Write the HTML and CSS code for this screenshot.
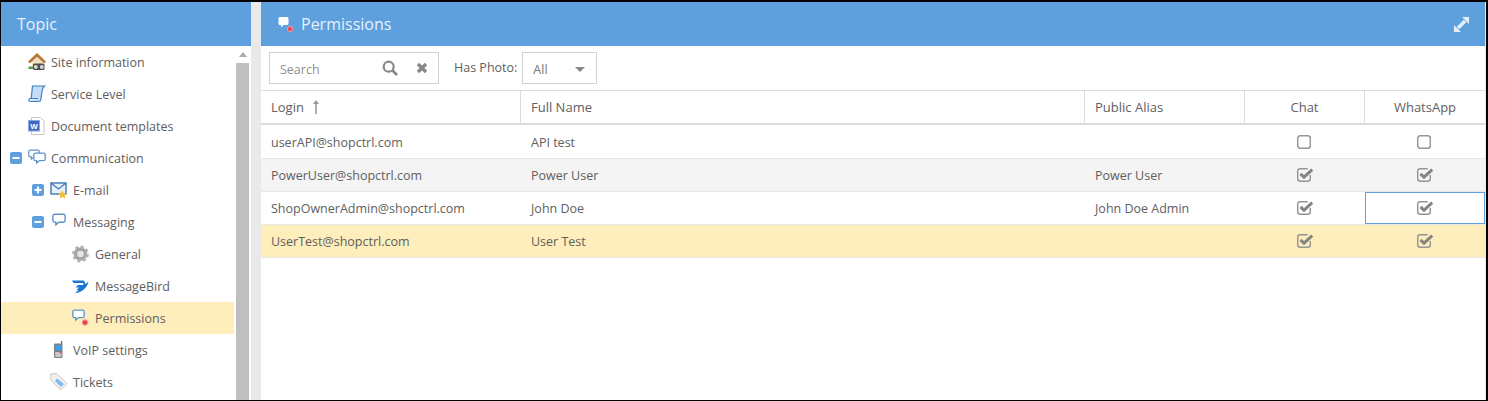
FILE: index.html
```html
<!DOCTYPE html>
<html lang="en">
<head>
<meta charset="utf-8">
<title>Permissions</title>
<link rel="stylesheet" href="styles.css">
</head>
<body>
<svg class="defs" width="0" height="0" aria-hidden="true">
  <defs>
    <symbol id="bubble" viewBox="0 0 16 16">
      <path d="M3 1.500h10a2 2 0 0 1 2 2v5a2 2 0 0 1-2 2H8l-3.500 3v-3H3a2 2 0 0 1-2-2v-5a2 2 0 0 1 2-2z" fill="#fff" stroke="#5f93cc" stroke-width="1.600"/>
    </symbol>
    <symbol id="box" viewBox="0 0 14 14" overflow="visible">
      <rect x="0.700" y="0.700" width="12.600" height="12.600" rx="2.500" fill="none" stroke="#949494" stroke-width="1.400"/>
    </symbol>
    <symbol id="check" viewBox="0 0 14 14" overflow="visible">
      <path d="M13.300 7v3.800a2.500 2.500 0 0 1-2.500 2.500H3.200a2.500 2.500 0 0 1-2.500-2.500V3.200a2.500 2.500 0 0 1 2.500-2.500h7.500" fill="none" stroke="#949494" stroke-width="1.400"/>
      <path d="M3.500 5.800l3.500 3.400L15.200 1.600" fill="none" stroke="#848484" stroke-width="3"/>
    </symbol>
    <symbol id="minus" viewBox="0 0 12 12">
      <rect width="12" height="12" rx="2" fill="#5e9fdd"/>
      <rect x="2.500" y="5" width="7" height="2" fill="#fff"/>
    </symbol>
    <symbol id="plus" viewBox="0 0 12 12">
      <rect width="12" height="12" rx="2" fill="#5e9fdd"/>
      <path d="M2.500 5H5V2.500h2V5h2.500v2H7v2.500H5V7H2.500z" fill="#fff"/>
    </symbol>
  </defs>
</svg>
<div class="app">
  <aside class="side">
    <header class="bar"><span class="bar-title">Topic</span></header>
    <div class="side-body">
      <ul class="tree">
        <li class="node"><span class="slot"></span>
          <svg class="ico" viewBox="0 0 18 18"><path d="M4 9l5-5 5 5v6H4z" fill="#f3e0bd"/><path d="M1 9.500l8-7.500 8 7.500" fill="none" stroke="#b5793c" stroke-width="2.800"/><rect x="5" y="10.500" width="11.500" height="6.500" rx="1.500" fill="#4f4f4f"/><circle cx="7.800" cy="14" r="2" fill="#d8d8d8"/><circle cx="13.800" cy="14" r="2" fill="#d8d8d8"/><rect x="0.500" y="13.500" width="4.500" height="2.500" fill="#5a9a4a"/></svg>
          <span class="label">Site information</span></li>
        <li class="node"><span class="slot"></span>
          <svg class="ico" viewBox="0 0 18 18"><path d="M4.500 1h12c-1.500 1-1.800 2-2.200 4l-1.500 9.500c-.2 1.200-1 2-2 2H1.500c1.200-.5 1.500-1.500 1.700-3z" fill="#c4dcf5" stroke="#3f80c4" stroke-width="1.200"/><path d="M1.500 16.500c-1.200-1-.6-3 .5-3h8" fill="#e2effb" stroke="#3f80c4" stroke-width="1.200"/></svg>
          <span class="label">Service Level</span></li>
        <li class="node"><span class="slot"></span>
          <svg class="ico" viewBox="0 0 18 18"><path d="M3.500 .5h9l3.500 3.500v13.500H3.500z" fill="#fff" stroke="#c8c8c8"/><rect x="0.500" y="3.500" width="11" height="10.500" fill="#3f69c0" stroke="#8fa8dc"/><text class="doc-w" x="6" y="12" text-anchor="middle">W</text></svg>
          <span class="label">Document templates</span></li>
        <li class="node"><span class="slot"><svg class="tog"><use href="#minus"/></svg></span>
          <svg class="ico" viewBox="0 0 18 18"><use href="#bubble" x="0" y="0" width="12" height="12"/><use href="#bubble" x="5" y="3" width="13" height="13"/></svg>
          <span class="label">Communication</span></li>
        <li class="node lv1"><span class="slot"><svg class="tog"><use href="#plus"/></svg></span>
          <svg class="ico" viewBox="0 0 18 18"><rect x="1" y="2" width="15" height="11" fill="#e6f0fb" stroke="#3f78b5" stroke-width="1.400"/><path d="M1 2l7.500 6L16 2" fill="none" stroke="#3f78b5" stroke-width="1.200"/><path d="M12.500 9.500l1.400 2.700 3 .4-2.200 2 .6 3-2.800-1.500-2.800 1.500.6-3-2.200-2 3-.4z" fill="#f2bf33"/></svg>
          <span class="label">E-mail</span></li>
        <li class="node lv1"><span class="slot"><svg class="tog"><use href="#minus"/></svg></span>
          <svg class="ico" viewBox="0 0 18 18"><use href="#bubble" x="2" y="0" width="14" height="14"/></svg>
          <span class="label">Messaging</span></li>
        <li class="node lv2"><span class="slot"></span>
          <svg class="ico" viewBox="0 0 18 18"><circle cx="8.500" cy="9" r="5" fill="#e4e4e4" stroke="#a4a4a4" stroke-width="3.400"/><circle cx="8.500" cy="9" r="7" fill="none" stroke="#b0b0b0" stroke-width="2.800" stroke-dasharray="2.900 2.600"/></svg>
          <span class="label">General</span></li>
        <li class="node lv2"><span class="slot"></span>
          <svg class="ico" viewBox="0 0 18 18"><path d="M0 3.500h12l1.500 3.500 3-2.500c-1 4.500-4 10.500-13.500 11.500l3.500-3H4.500L7 10.500H3.500L6 8h5.500L11 6H1.500z" fill="#1b76cf"/></svg>
          <span class="label">MessageBird</span></li>
        <li class="node lv2 is-selected"><span class="slot"></span>
          <svg class="ico" viewBox="0 0 18 18"><use href="#bubble" x="0" y="0" width="13" height="13"/><circle cx="13" cy="13.500" r="2.800" fill="#e8454e" stroke="#f3a0a0"/></svg>
          <span class="label">Permissions</span></li>
        <li class="node lv1"><span class="slot"></span>
          <svg class="ico" viewBox="0 0 18 18"><path d="M11 0h1.200v3H11z" fill="#666"/><rect x="4" y="2.500" width="8.500" height="14.500" rx="1" fill="#7e7e7e"/><rect x="5.200" y="4" width="6.200" height="5.500" fill="#3f9fe8"/><rect x="5.200" y="11" width="6.200" height="5" fill="#c8c8c8"/><rect x="9.500" y="11" width="1.500" height="1.500" fill="#d9534f"/></svg>
          <span class="label">VoIP settings</span></li>
        <li class="node lv1"><span class="slot"></span>
          <svg class="ico" viewBox="0 0 18 18"><path d="M.5 1l6-.5L17 10.500 10.500 17 1 7z" fill="#efefef" stroke="#c8c8c8"/><path d="M7 5.500l7 5.500-3 3-6-6z" fill="#7dbcf0"/></svg>
          <span class="label">Tickets</span></li>
      </ul>
      <div class="scroll">
        <div class="scroll-btn"><span class="scroll-up"></span></div>
        <div class="scroll-thumb"></div>
      </div>
    </div>
  </aside>
  <main class="main">
    <header class="bar bar-main">
      <svg class="bar-ico" viewBox="0 0 18 18"><path d="M2 2h7a1.500 1.500 0 0 1 1.500 1.500v5A1.500 1.500 0 0 1 9 10H5.500L3 12.500V10H2A1.500 1.500 0 0 1 .5 8.500v-5A1.500 1.500 0 0 1 2 2z" fill="#fff"/><circle cx="12" cy="14" r="2.600" fill="#e8454e" stroke="#f3a0a0"/></svg>
      <span class="bar-title">Permissions</span>
      <svg class="expand" viewBox="0 0 15 15"><path d="M8 0h7v7zM0 8v7h7z" fill="#e4eff9"/><path d="M4 11l7-7" stroke="#e4eff9" stroke-width="3.600"/></svg>
    </header>
    <div class="toolbar">
      <div class="search">
        <span class="placeholder">Search</span>
        <svg class="search-ico" viewBox="0 0 16 16"><circle cx="6.700" cy="6.700" r="5" fill="none" stroke="#888" stroke-width="2.200"/><path d="M10.500 10.500l4.500 4.500" stroke="#888" stroke-width="2.600"/></svg>
        <svg class="clear-ico" viewBox="0 0 12 12"><path d="M2 2l8 8M10 2l-8 8" stroke="#888" stroke-width="3.400"/></svg>
      </div>
      <span class="filter-label">Has Photo:</span>
      <div class="select"><span>All</span><span class="caret"></span></div>
    </div>
    <table class="grid">
      <colgroup>
        <col class="c-login"><col><col class="c-alias"><col class="c-flag"><col class="c-flag">
      </colgroup>
      <thead>
        <tr>
          <th>Login <svg class="sort" viewBox="0 0 8 14"><path d="M4 0L7 4H4.800v10H3.200V4H1z" fill="#999"/></svg></th>
          <th>Full Name</th>
          <th>Public Alias</th>
          <th class="mid">Chat</th>
          <th class="mid">WhatsApp</th>
        </tr>
      </thead>
      <tbody>
        <tr class="first">
          <td>userAPI@shopctrl.com</td><td>API test</td><td></td>
          <td class="mid"><svg class="cb"><use href="#box" width="14" height="14"/></svg></td>
          <td class="mid"><svg class="cb"><use href="#box" width="14" height="14"/></svg></td>
        </tr>
        <tr class="alt">
          <td>PowerUser@shopctrl.com</td><td>Power User</td><td>Power User</td>
          <td class="mid"><svg class="cb"><use href="#check" width="14" height="14"/></svg></td>
          <td class="mid"><svg class="cb"><use href="#check" width="14" height="14"/></svg></td>
        </tr>
        <tr>
          <td>ShopOwnerAdmin@shopctrl.com</td><td>John Doe</td><td>John Doe Admin</td>
          <td class="mid"><svg class="cb"><use href="#check" width="14" height="14"/></svg></td>
          <td class="mid focus-cell"><div class="focus-box"><svg class="cb"><use href="#check" width="14" height="14"/></svg></div></td>
        </tr>
        <tr class="sel">
          <td>UserTest@shopctrl.com</td><td>User Test</td><td></td>
          <td class="mid"><svg class="cb"><use href="#check" width="14" height="14"/></svg></td>
          <td class="mid"><svg class="cb"><use href="#check" width="14" height="14"/></svg></td>
        </tr>
      </tbody>
    </table>
  </main>
</div>
</body>
</html>
```

FILE: styles.css
```css
* { box-sizing: border-box; }
html, body { margin: 0; height: 100%; }
body {
  font-family: "Open Sans", "Liberation Sans", sans-serif;
  font-size: 12.500px;
  color: #606060;
  background: #fff;
  overflow: hidden;
}
.defs { position: absolute; }
.app {
  display: flex;
  height: 401px;
  border: 1px solid #000;
  border-top-width: 2px;
  border-right-width: 2px;
  background: #e9e9e9;
}
.side {
  width: 250px;
  flex: none;
  display: flex;
  flex-direction: column;
  background: #fff;
}
.bar {
  height: 44px;
  flex: none;
  display: flex;
  align-items: center;
  background: #5e9fdd;
  color: #e6f1fb;
}
.bar-title { font-size: 16px; line-height: 44px; }
.side .bar { padding-left: 16px; }
.side-body { flex: 1; display: flex; min-height: 0; }
.tree { list-style: none; margin: 0 2px 0 0; padding: 0; width: 233px; flex: none; }
.node {
  height: 32px;
  display: flex;
  align-items: center;
  padding-left: 9px;
}
.lv1 { padding-left: 31px; }
.lv2 { padding-left: 53px; }
.is-selected { background: #fdeebb; }
.slot { width: 18px; flex: none; display: flex; }
.tog { width: 12px; height: 12px; }
.ico { width: 18px; height: 18px; flex: none; }
.label { margin-left: 5px; white-space: nowrap; }
.doc-w { font: bold 8px "Liberation Sans", sans-serif; fill: #fff; }
.scroll { width: 13px; flex: none; display: flex; flex-direction: column; }
.scroll-btn { height: 17px; display: flex; align-items: center; justify-content: center; }
.scroll-up {
  width: 0;
  height: 0;
  border: 4px solid transparent;
  border-top: 0;
  border-bottom: 5px solid #aaa;
}
.scroll-thumb { flex: 1; background: #bfbfbf; }
.main {
  flex: 1;
  min-width: 0;
  margin-left: 10px;
  margin-right: 1px;
  display: flex;
  flex-direction: column;
  background: #fff;
}
.bar-main { padding: 0 16px 0 17px; }
.bar-ico { width: 18px; height: 18px; margin-right: 5px; }
.bar-main .bar-title { flex: 1; }
.expand { width: 15px; height: 15px; }
.toolbar {
  height: 45px;
  flex: none;
  display: flex;
  align-items: flex-start;
  padding: 6px 0 0 8px;
  border-bottom: 1px solid #dcdcdc;
}
.search {
  width: 170px;
  height: 32px;
  border: 1px solid #d2d2d2;
  display: flex;
  align-items: center;
  padding-left: 10px;
}
.placeholder { color: #8f8f8f; flex: 1; padding-top: 2px; }
.search-ico { width: 16px; height: 16px; margin-right: 18px; }
.clear-ico { width: 12px; height: 12px; margin-right: 10px; }
.filter-label { margin-left: 15px; margin-right: 5px; line-height: 31px; }
.select {
  width: 75px;
  height: 32px;
  border: 1px solid #d2d2d2;
  display: flex;
  align-items: center;
  justify-content: space-between;
  padding: 2px 11px 0 10px;
  color: #777;
}
.caret {
  width: 0;
  height: 0;
  border: 5px solid transparent;
  border-bottom: 0;
  border-top: 5px solid #888;
}
.grid { width: 100%; border-collapse: separate; border-spacing: 0; table-layout: fixed; }
.c-login { width: 260px; }
.c-alias { width: 160px; }
.c-flag { width: 120px; }
.grid th {
  height: 34px;
  padding: 0 10px;
  text-align: left;
  font-size: 13px;
  font-weight: 400;
  color: #606060;
  border-right: 1px solid #dcdcdc;
  border-bottom: 2px solid #dcdcdc;
}
.grid th:last-child { border-right: 0; }
.grid td {
  height: 33px;
  padding: 0 10px;
  border-bottom: 1px solid #e8e8e8;
  white-space: nowrap;
}
.grid .mid { text-align: center; }
.grid td.mid { padding: 0 2px 0 0; }
.grid th.mid { padding: 0; }
.grid .first td { height: 34px; padding-top: 1px; }
.sort { width: 8px; height: 14px; margin-left: 5px; vertical-align: -2px; }
.cb { display: block; width: 14px; height: 14px; margin: 0 auto; overflow: visible; }
.alt td { background: #f4f4f4; }
.sel td { background: #fdeebb; }
.grid td.focus-cell { padding: 0; vertical-align: top; }
.focus-box {
  height: 32px;
  display: flex;
  align-items: center;
  padding-right: 2px;
  border: 1px solid #5e9fdd;
}
```
